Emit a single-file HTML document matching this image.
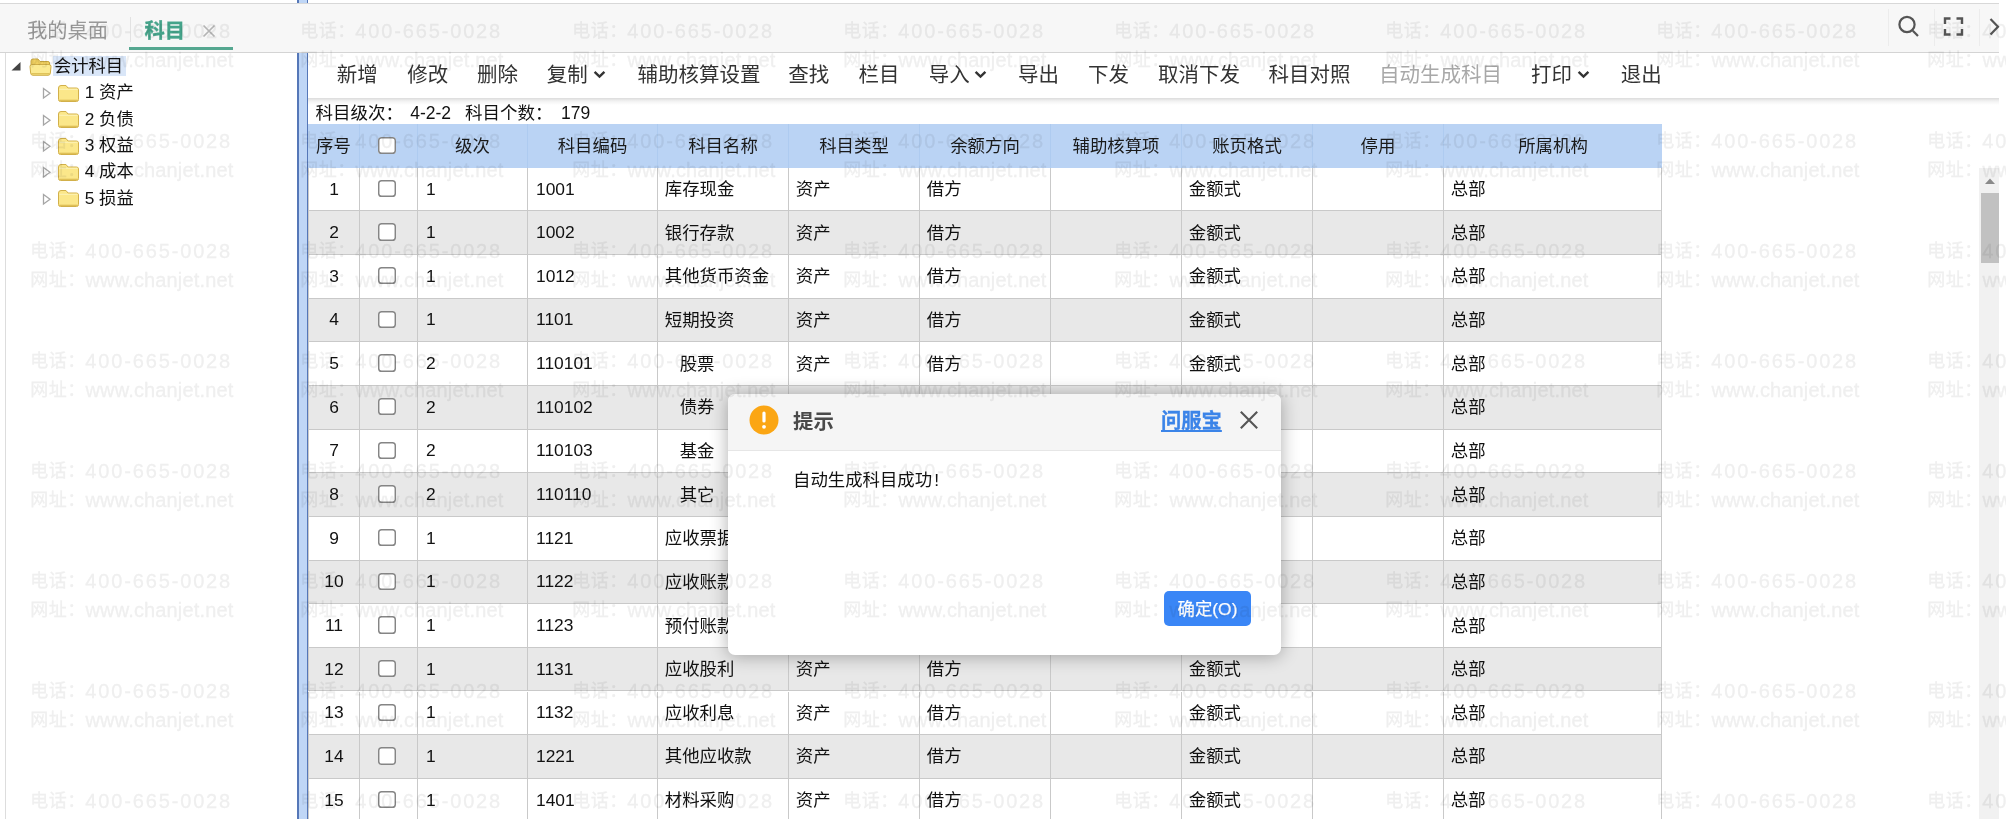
<!DOCTYPE html>
<html lang="zh-CN">
<head>
<meta charset="utf-8">
<title>科目</title>
<style>
*{box-sizing:border-box;margin:0;padding:0}
html,body{width:2006px;height:819px;overflow:hidden;background:#fff}
body{position:relative;font-family:"Liberation Sans","Noto Sans CJK SC",sans-serif;color:#222}
.abs{position:absolute}
/* tab bar */
.tabbar{position:absolute;left:0;top:3px;width:1999px;height:50px;background:#f7f7f7;border-top:1px solid #d8d8d8;border-bottom:1px solid #d4d4d4}
.tab1{position:absolute;left:27px;top:13.5px;font-size:20.3px;line-height:26px;color:#999;white-space:nowrap}
.tabsep{position:absolute;left:129.5px;top:13px;width:1px;height:25px;background:#e2e2e2}
.tab2{position:absolute;left:144.5px;top:13.5px;font-size:20.3px;line-height:26px;color:#45a38a;-webkit-text-stroke:.35px #45a38a;font-weight:bold;white-space:nowrap}
.tabx{position:absolute;left:202px;top:20px;width:14px;height:14px}
.tabline{position:absolute;left:129px;top:42.8px;width:103.5px;height:3.6px;background:#55a790}
.vsep{position:absolute;top:5px;width:1px;height:37px;background:#ececec}
/* splitter */
.split{position:absolute;left:296.5px;top:0;width:11px;height:819px;background:#bfd6f6;border-left:2px solid #5577b8;border-right:1.5px solid #5577b8}
/* left tree */
.left{position:absolute;left:5px;top:53px;width:291px;height:766px;border-left:1px solid #ddd;background:#fff}
.node{position:absolute;font-size:17.3px;line-height:22px;white-space:nowrap;color:#111}
.sel{background:#d9e6f8;padding:0 2.5px 0 1.5px}
/* toolbar */
.toolbar{position:absolute;left:308px;top:53px;width:1691px;height:45px;background:#fff}
.tshadow{position:absolute;left:308px;top:97.5px;width:1691px;height:7px;background:linear-gradient(rgba(0,0,0,.14),rgba(0,0,0,.05) 45%,rgba(0,0,0,0))}
.tb{position:absolute;top:8.5px;font-size:20.5px;line-height:26px;color:#333;white-space:nowrap}
.tb.dis{color:#a8a8a8}
.chev{position:absolute;top:16.5px;width:13px;height:9px}
.info{position:absolute;top:102px;font-size:17.5px;line-height:22px;color:#111;white-space:nowrap}
/* grid */
.grid{position:absolute;left:308px;top:0;width:1354px;height:819px}
.thead{position:absolute;left:0;width:1354px;background:#bad3f4}
.th{position:absolute;top:0;height:100%;display:flex;align-items:center;justify-content:center;font-size:17.4px;color:#1a1a1a;border-left:1px solid #aecbf0;white-space:nowrap}
.th:first-child{border-left:none}
.tr{position:absolute;left:0;width:1354px;background:#fff;border-bottom:1px solid #c9c9c9}
.tr.even{background:#e8e8e8}
.td{position:absolute;top:0;height:100%;display:flex;align-items:center;padding-left:8px;font-size:17.4px;color:#111;border-left:1px solid #c9c9c9;white-space:nowrap;overflow:hidden}
.td:last-child{border-right:1px solid #c9c9c9}
.td.c{justify-content:center;padding-left:0}
.td.z,.th.z{padding-bottom:3px}
.td.z{padding-left:6.8px}
.td.k{padding-right:3.6px}
.th.k{padding-right:3.6px}
.cb{display:inline-block;width:17.6px;height:17.4px;border-radius:3.6px;background:#fff;box-shadow:inset 0 0 0 1.45px #858585;position:relative;top:-.6px}
/* scrollbar */
.sbar{position:absolute;left:1979px;top:168px;width:20px;height:651px;background:#f1f1f1}
.sthumb{position:absolute;left:2px;top:24.5px;width:18px;height:70px;background:#c1c1c1}
/* dialog */
.dlg{position:absolute;left:727.5px;top:393.5px;width:553px;height:261px;background:#fff;border-radius:7px;box-shadow:0 1px 18px rgba(0,0,0,.32);overflow:hidden}
.dhead{position:absolute;left:0;top:0;width:100%;height:57px;background:#f5f5f5;border-bottom:1px solid #e6e6e6}
.dtitle{position:absolute;left:65.5px;top:14px;font-size:20.4px;line-height:28px;font-weight:bold;color:#4a4a4a}
.dlink{position:absolute;left:433.5px;top:13.5px;font-size:20.3px;line-height:28px;font-weight:bold;color:#3b84e8;-webkit-text-stroke:.3px #3b84e8;text-decoration:underline;white-space:nowrap}
.dmsg{position:absolute;left:65.5px;top:74px;font-size:17.4px;line-height:24px;color:#111;white-space:nowrap}
.dbtn{position:absolute;left:436.5px;top:197.5px;width:87px;height:34.5px;background:#3a86f6;border-radius:5px;color:#fff;-webkit-text-stroke:.25px #fff;font-size:17.4px;line-height:36.5px;text-align:center;white-space:nowrap}
/* watermark */
.wm{position:absolute;left:0;top:0;width:2006px;height:819px;overflow:hidden;pointer-events:none;mix-blend-mode:multiply}
.w{position:absolute;height:28.6px;line-height:28.6px;color:#efefef;-webkit-text-stroke:.3px #efefef;white-space:nowrap}
.w .a{position:absolute;left:.3px;top:0;font-size:18px;letter-spacing:.5px}
.w .b{position:absolute;left:55.3px;top:0;font-size:20px;letter-spacing:1.85px}
.w .c{position:absolute;left:55.5px;top:0;font-size:20px;letter-spacing:.15px}

</style>
</head>
<body>
<div class="split"></div>
<div class="tabbar">
  <div class="tab1">我的桌面</div>
  <div class="tabsep"></div>
  <div class="tab2">科目</div>
  <svg class="tabx" viewBox="0 0 14 14"><path d="M1.5 1.5 L12.5 12.5 M12.5 1.5 L1.5 12.5" stroke="#b4b4b4" stroke-width="1.7" fill="none"/></svg>
  <div class="tabline"></div>
  <div class="vsep" style="left:1888px"></div>
  <div class="vsep" style="left:1933.5px"></div>
  <div class="vsep" style="left:1978.5px"></div>
  <svg class="abs" style="left:1895.3px;top:8.3px" width="26" height="30" viewBox="0 0 26 30"><circle cx="12" cy="12.5" r="7.6" stroke="#555" stroke-width="2.2" fill="none"/><path d="M17.8 18.8 L23 24" stroke="#555" stroke-width="2.2" fill="none"/></svg>
  <svg class="abs" style="left:1943px;top:12px" width="22" height="22" viewBox="0 0 22 22"><path d="M2 8 V2.5 H7.5 M13.5 2.5 H19 V8 M19 13 V18.5 H13.5 M7.5 18.5 H2 V13" stroke="#555" stroke-width="2.4" fill="none"/></svg>
  <svg class="abs" style="left:1988px;top:12px" width="12" height="22" viewBox="0 0 12 22"><path d="M2.5 3 L10 10.8 L2.5 18.6" stroke="#555" stroke-width="2.2" fill="none"/></svg>
</div>
<div class="left">
  <svg class="abs" style="left:4.2px;top:8.3px" width="12" height="11" viewBox="0 0 12 11"><path d="M10.5 1 V9.5 H1.5 Z" fill="#444"/></svg>
  <svg class="abs" style="left:22px;top:3.5px" width="25" height="20" viewBox="0 0 25 20"><path d="M3 6 V4 Q3 2 5 2 H10 L12 4.5 H20 Q21.5 4.5 21.5 6 V9 H3 Z" fill="#f0d060" stroke="#c9a840" stroke-width="1"/><path d="M2 9.5 Q2 7.5 4 7.5 H21 Q23 7.5 23 9.5 L22.3 16.5 Q22 18.3 20 18.3 H5 Q3 18.3 2.7 16.5 Z" fill="#fbea90" stroke="#cfae48" stroke-width="1"/><path d="M3.2 16.8 H21.8" stroke="#d9b94e" stroke-width="1.2"/></svg>
  <div class="node" style="left:46.5px;top:1.5px"><span class="sel">会计科目</span></div>
  <svg class="abs" style="left:36.3px;top:34.3px" width="10" height="13" viewBox="0 0 10 13"><path d="M1.5 1.5 L8 6.3 L1.5 11 Z" fill="#fff" stroke="#a6a6a6" stroke-width="1.3"/></svg>
  <svg class="abs" style="left:51px;top:31.0px" width="23" height="19" viewBox="0 0 23 19"><path d="M1.5 4 Q1.5 1.5 4 1.5 H9 L11 4 H19.5 Q21.5 4 21.5 6 V15.5 Q21.5 17.5 19.5 17.5 H3.5 Q1.5 17.5 1.5 15.5 Z" fill="#fbe78a" stroke="#d2b04a" stroke-width="1"/><path d="M2.2 16.3 H20.8" stroke="#dcbc52" stroke-width="1.2"/><path d="M2.3 5.3 H20.7" stroke="#fdf3b8" stroke-width="1"/></svg>
  <div class="node" style="left:78.7px;top:28.3px">1 资产</div>
  <svg class="abs" style="left:36.3px;top:60.6px" width="10" height="13" viewBox="0 0 10 13"><path d="M1.5 1.5 L8 6.3 L1.5 11 Z" fill="#fff" stroke="#a6a6a6" stroke-width="1.3"/></svg>
  <svg class="abs" style="left:51px;top:57.3px" width="23" height="19" viewBox="0 0 23 19"><path d="M1.5 4 Q1.5 1.5 4 1.5 H9 L11 4 H19.5 Q21.5 4 21.5 6 V15.5 Q21.5 17.5 19.5 17.5 H3.5 Q1.5 17.5 1.5 15.5 Z" fill="#fbe78a" stroke="#d2b04a" stroke-width="1"/><path d="M2.2 16.3 H20.8" stroke="#dcbc52" stroke-width="1.2"/><path d="M2.3 5.3 H20.7" stroke="#fdf3b8" stroke-width="1"/></svg>
  <div class="node" style="left:78.7px;top:54.6px">2 负债</div>
  <svg class="abs" style="left:36.3px;top:87.0px" width="10" height="13" viewBox="0 0 10 13"><path d="M1.5 1.5 L8 6.3 L1.5 11 Z" fill="#fff" stroke="#a6a6a6" stroke-width="1.3"/></svg>
  <svg class="abs" style="left:51px;top:83.7px" width="23" height="19" viewBox="0 0 23 19"><path d="M1.5 4 Q1.5 1.5 4 1.5 H9 L11 4 H19.5 Q21.5 4 21.5 6 V15.5 Q21.5 17.5 19.5 17.5 H3.5 Q1.5 17.5 1.5 15.5 Z" fill="#fbe78a" stroke="#d2b04a" stroke-width="1"/><path d="M2.2 16.3 H20.8" stroke="#dcbc52" stroke-width="1.2"/><path d="M2.3 5.3 H20.7" stroke="#fdf3b8" stroke-width="1"/></svg>
  <div class="node" style="left:78.7px;top:81.0px">3 权益</div>
  <svg class="abs" style="left:36.3px;top:113.4px" width="10" height="13" viewBox="0 0 10 13"><path d="M1.5 1.5 L8 6.3 L1.5 11 Z" fill="#fff" stroke="#a6a6a6" stroke-width="1.3"/></svg>
  <svg class="abs" style="left:51px;top:110.1px" width="23" height="19" viewBox="0 0 23 19"><path d="M1.5 4 Q1.5 1.5 4 1.5 H9 L11 4 H19.5 Q21.5 4 21.5 6 V15.5 Q21.5 17.5 19.5 17.5 H3.5 Q1.5 17.5 1.5 15.5 Z" fill="#fbe78a" stroke="#d2b04a" stroke-width="1"/><path d="M2.2 16.3 H20.8" stroke="#dcbc52" stroke-width="1.2"/><path d="M2.3 5.3 H20.7" stroke="#fdf3b8" stroke-width="1"/></svg>
  <div class="node" style="left:78.7px;top:107.4px">4 成本</div>
  <svg class="abs" style="left:36.3px;top:139.7px" width="10" height="13" viewBox="0 0 10 13"><path d="M1.5 1.5 L8 6.3 L1.5 11 Z" fill="#fff" stroke="#a6a6a6" stroke-width="1.3"/></svg>
  <svg class="abs" style="left:51px;top:136.4px" width="23" height="19" viewBox="0 0 23 19"><path d="M1.5 4 Q1.5 1.5 4 1.5 H9 L11 4 H19.5 Q21.5 4 21.5 6 V15.5 Q21.5 17.5 19.5 17.5 H3.5 Q1.5 17.5 1.5 15.5 Z" fill="#fbe78a" stroke="#d2b04a" stroke-width="1"/><path d="M2.2 16.3 H20.8" stroke="#dcbc52" stroke-width="1.2"/><path d="M2.3 5.3 H20.7" stroke="#fdf3b8" stroke-width="1"/></svg>
  <div class="node" style="left:78.7px;top:133.7px">5 损益</div>
</div>
<div class="toolbar">
  <div class="tb" style="left:28.7px">新增</div>
  <div class="tb" style="left:99.2px">修改</div>
  <div class="tb" style="left:169.0px">删除</div>
  <div class="tb" style="left:238.8px">复制</div>
  <svg class="chev" style="left:284.5px" viewBox="0 0 13 9"><path d="M1.6 1.8 L6.5 6.6 L11.4 1.8" stroke="#333" stroke-width="2.4" fill="none"/></svg>
  <div class="tb" style="left:329.5px">辅助核算设置</div>
  <div class="tb" style="left:480.2px">查找</div>
  <div class="tb" style="left:550.5px">栏目</div>
  <div class="tb" style="left:620.7px">导入</div>
  <svg class="chev" style="left:666.4px" viewBox="0 0 13 9"><path d="M1.6 1.8 L6.5 6.6 L11.4 1.8" stroke="#333" stroke-width="2.4" fill="none"/></svg>
  <div class="tb" style="left:710.0px">导出</div>
  <div class="tb" style="left:780.0px">下发</div>
  <div class="tb" style="left:850.0px">取消下发</div>
  <div class="tb" style="left:960.5px">科目对照</div>
  <div class="tb dis" style="left:1071.0px">自动生成科目</div>
  <div class="tb" style="left:1223.0px">打印</div>
  <svg class="chev" style="left:1268.7px" viewBox="0 0 13 9"><path d="M1.6 1.8 L6.5 6.6 L11.4 1.8" stroke="#333" stroke-width="2.4" fill="none"/></svg>
  <div class="tb" style="left:1312.7px">退出</div>
</div>
<div class="tshadow"></div>
<div class="info" style="left:315.5px">科目级次：</div><div class="info" style="left:410.2px">4-2-2</div><div class="info" style="left:465px">科目个数：</div><div class="info" style="left:561px">179</div>
<div class="grid">
<div class="thead" style="top:124.30px;height:43.40px">
<div class="th z" style="left:0px;width:51px">序号</div>
<div class="th k" style="left:51px;width:58px"><span class="cb"></span></div>
<div class="th z" style="left:109px;width:110px">级次</div>
<div class="th z" style="left:219px;width:130px">科目编码</div>
<div class="th z" style="left:349px;width:131px">科目名称</div>
<div class="th z" style="left:480px;width:131px">科目类型</div>
<div class="th z" style="left:611px;width:131px">余额方向</div>
<div class="th z" style="left:742px;width:131px">辅助核算项</div>
<div class="th z" style="left:873px;width:131px">账页格式</div>
<div class="th z" style="left:1004px;width:131px">停用</div>
<div class="th z" style="left:1135px;width:219px">所属机构</div>
</div>
<div class="tr" style="top:167.70px;height:43.65px">
<div class="td c" style="left:0px;width:51px">1</div><div class="td c k" style="left:51px;width:58px"><span class="cb"></span></div><div class="td" style="left:109px;width:110px">1</div><div class="td" style="left:219px;width:130px">1001</div><div class="td z" style="left:349px;width:131px">库存现金</div><div class="td z" style="left:480px;width:131px">资产</div><div class="td z" style="left:611px;width:131px">借方</div><div class="td z" style="left:742px;width:131px"></div><div class="td z" style="left:873px;width:131px">金额式</div><div class="td z" style="left:1004px;width:131px"></div><div class="td z" style="left:1135px;width:219px">总部</div>
</div>
<div class="tr even" style="top:211.35px;height:43.65px">
<div class="td c" style="left:0px;width:51px">2</div><div class="td c k" style="left:51px;width:58px"><span class="cb"></span></div><div class="td" style="left:109px;width:110px">1</div><div class="td" style="left:219px;width:130px">1002</div><div class="td z" style="left:349px;width:131px">银行存款</div><div class="td z" style="left:480px;width:131px">资产</div><div class="td z" style="left:611px;width:131px">借方</div><div class="td z" style="left:742px;width:131px"></div><div class="td z" style="left:873px;width:131px">金额式</div><div class="td z" style="left:1004px;width:131px"></div><div class="td z" style="left:1135px;width:219px">总部</div>
</div>
<div class="tr" style="top:255.00px;height:43.65px">
<div class="td c" style="left:0px;width:51px">3</div><div class="td c k" style="left:51px;width:58px"><span class="cb"></span></div><div class="td" style="left:109px;width:110px">1</div><div class="td" style="left:219px;width:130px">1012</div><div class="td z" style="left:349px;width:131px">其他货币资金</div><div class="td z" style="left:480px;width:131px">资产</div><div class="td z" style="left:611px;width:131px">借方</div><div class="td z" style="left:742px;width:131px"></div><div class="td z" style="left:873px;width:131px">金额式</div><div class="td z" style="left:1004px;width:131px"></div><div class="td z" style="left:1135px;width:219px">总部</div>
</div>
<div class="tr even" style="top:298.65px;height:43.65px">
<div class="td c" style="left:0px;width:51px">4</div><div class="td c k" style="left:51px;width:58px"><span class="cb"></span></div><div class="td" style="left:109px;width:110px">1</div><div class="td" style="left:219px;width:130px">1101</div><div class="td z" style="left:349px;width:131px">短期投资</div><div class="td z" style="left:480px;width:131px">资产</div><div class="td z" style="left:611px;width:131px">借方</div><div class="td z" style="left:742px;width:131px"></div><div class="td z" style="left:873px;width:131px">金额式</div><div class="td z" style="left:1004px;width:131px"></div><div class="td z" style="left:1135px;width:219px">总部</div>
</div>
<div class="tr" style="top:342.30px;height:43.65px">
<div class="td c" style="left:0px;width:51px">5</div><div class="td c k" style="left:51px;width:58px"><span class="cb"></span></div><div class="td" style="left:109px;width:110px">2</div><div class="td" style="left:219px;width:130px">110101</div><div class="td z" style="left:349px;width:131px;padding-left:21.7px">股票</div><div class="td z" style="left:480px;width:131px">资产</div><div class="td z" style="left:611px;width:131px">借方</div><div class="td z" style="left:742px;width:131px"></div><div class="td z" style="left:873px;width:131px">金额式</div><div class="td z" style="left:1004px;width:131px"></div><div class="td z" style="left:1135px;width:219px">总部</div>
</div>
<div class="tr even" style="top:385.95px;height:43.65px">
<div class="td c" style="left:0px;width:51px">6</div><div class="td c k" style="left:51px;width:58px"><span class="cb"></span></div><div class="td" style="left:109px;width:110px">2</div><div class="td" style="left:219px;width:130px">110102</div><div class="td z" style="left:349px;width:131px;padding-left:21.7px">债券</div><div class="td z" style="left:480px;width:131px">资产</div><div class="td z" style="left:611px;width:131px">借方</div><div class="td z" style="left:742px;width:131px"></div><div class="td z" style="left:873px;width:131px">金额式</div><div class="td z" style="left:1004px;width:131px"></div><div class="td z" style="left:1135px;width:219px">总部</div>
</div>
<div class="tr" style="top:429.60px;height:43.65px">
<div class="td c" style="left:0px;width:51px">7</div><div class="td c k" style="left:51px;width:58px"><span class="cb"></span></div><div class="td" style="left:109px;width:110px">2</div><div class="td" style="left:219px;width:130px">110103</div><div class="td z" style="left:349px;width:131px;padding-left:21.7px">基金</div><div class="td z" style="left:480px;width:131px">资产</div><div class="td z" style="left:611px;width:131px">借方</div><div class="td z" style="left:742px;width:131px"></div><div class="td z" style="left:873px;width:131px">金额式</div><div class="td z" style="left:1004px;width:131px"></div><div class="td z" style="left:1135px;width:219px">总部</div>
</div>
<div class="tr even" style="top:473.25px;height:43.65px">
<div class="td c" style="left:0px;width:51px">8</div><div class="td c k" style="left:51px;width:58px"><span class="cb"></span></div><div class="td" style="left:109px;width:110px">2</div><div class="td" style="left:219px;width:130px">110110</div><div class="td z" style="left:349px;width:131px;padding-left:21.7px">其它</div><div class="td z" style="left:480px;width:131px">资产</div><div class="td z" style="left:611px;width:131px">借方</div><div class="td z" style="left:742px;width:131px"></div><div class="td z" style="left:873px;width:131px">金额式</div><div class="td z" style="left:1004px;width:131px"></div><div class="td z" style="left:1135px;width:219px">总部</div>
</div>
<div class="tr" style="top:516.90px;height:43.65px">
<div class="td c" style="left:0px;width:51px">9</div><div class="td c k" style="left:51px;width:58px"><span class="cb"></span></div><div class="td" style="left:109px;width:110px">1</div><div class="td" style="left:219px;width:130px">1121</div><div class="td z" style="left:349px;width:131px">应收票据</div><div class="td z" style="left:480px;width:131px">资产</div><div class="td z" style="left:611px;width:131px">借方</div><div class="td z" style="left:742px;width:131px"></div><div class="td z" style="left:873px;width:131px">金额式</div><div class="td z" style="left:1004px;width:131px"></div><div class="td z" style="left:1135px;width:219px">总部</div>
</div>
<div class="tr even" style="top:560.55px;height:43.65px">
<div class="td c" style="left:0px;width:51px">10</div><div class="td c k" style="left:51px;width:58px"><span class="cb"></span></div><div class="td" style="left:109px;width:110px">1</div><div class="td" style="left:219px;width:130px">1122</div><div class="td z" style="left:349px;width:131px">应收账款</div><div class="td z" style="left:480px;width:131px">资产</div><div class="td z" style="left:611px;width:131px">借方</div><div class="td z" style="left:742px;width:131px"></div><div class="td z" style="left:873px;width:131px">金额式</div><div class="td z" style="left:1004px;width:131px"></div><div class="td z" style="left:1135px;width:219px">总部</div>
</div>
<div class="tr" style="top:604.20px;height:43.65px">
<div class="td c" style="left:0px;width:51px">11</div><div class="td c k" style="left:51px;width:58px"><span class="cb"></span></div><div class="td" style="left:109px;width:110px">1</div><div class="td" style="left:219px;width:130px">1123</div><div class="td z" style="left:349px;width:131px">预付账款</div><div class="td z" style="left:480px;width:131px">资产</div><div class="td z" style="left:611px;width:131px">借方</div><div class="td z" style="left:742px;width:131px"></div><div class="td z" style="left:873px;width:131px">金额式</div><div class="td z" style="left:1004px;width:131px"></div><div class="td z" style="left:1135px;width:219px">总部</div>
</div>
<div class="tr even" style="top:647.85px;height:43.65px">
<div class="td c" style="left:0px;width:51px">12</div><div class="td c k" style="left:51px;width:58px"><span class="cb"></span></div><div class="td" style="left:109px;width:110px">1</div><div class="td" style="left:219px;width:130px">1131</div><div class="td z" style="left:349px;width:131px">应收股利</div><div class="td z" style="left:480px;width:131px">资产</div><div class="td z" style="left:611px;width:131px">借方</div><div class="td z" style="left:742px;width:131px"></div><div class="td z" style="left:873px;width:131px">金额式</div><div class="td z" style="left:1004px;width:131px"></div><div class="td z" style="left:1135px;width:219px">总部</div>
</div>
<div class="tr" style="top:691.50px;height:43.65px">
<div class="td c" style="left:0px;width:51px">13</div><div class="td c k" style="left:51px;width:58px"><span class="cb"></span></div><div class="td" style="left:109px;width:110px">1</div><div class="td" style="left:219px;width:130px">1132</div><div class="td z" style="left:349px;width:131px">应收利息</div><div class="td z" style="left:480px;width:131px">资产</div><div class="td z" style="left:611px;width:131px">借方</div><div class="td z" style="left:742px;width:131px"></div><div class="td z" style="left:873px;width:131px">金额式</div><div class="td z" style="left:1004px;width:131px"></div><div class="td z" style="left:1135px;width:219px">总部</div>
</div>
<div class="tr even" style="top:735.15px;height:43.65px">
<div class="td c" style="left:0px;width:51px">14</div><div class="td c k" style="left:51px;width:58px"><span class="cb"></span></div><div class="td" style="left:109px;width:110px">1</div><div class="td" style="left:219px;width:130px">1221</div><div class="td z" style="left:349px;width:131px">其他应收款</div><div class="td z" style="left:480px;width:131px">资产</div><div class="td z" style="left:611px;width:131px">借方</div><div class="td z" style="left:742px;width:131px"></div><div class="td z" style="left:873px;width:131px">金额式</div><div class="td z" style="left:1004px;width:131px"></div><div class="td z" style="left:1135px;width:219px">总部</div>
</div>
<div class="tr" style="top:778.80px;height:43.65px">
<div class="td c" style="left:0px;width:51px">15</div><div class="td c k" style="left:51px;width:58px"><span class="cb"></span></div><div class="td" style="left:109px;width:110px">1</div><div class="td" style="left:219px;width:130px">1401</div><div class="td z" style="left:349px;width:131px">材料采购</div><div class="td z" style="left:480px;width:131px">资产</div><div class="td z" style="left:611px;width:131px">借方</div><div class="td z" style="left:742px;width:131px"></div><div class="td z" style="left:873px;width:131px">金额式</div><div class="td z" style="left:1004px;width:131px"></div><div class="td z" style="left:1135px;width:219px">总部</div>
</div>
</div>
<div class="sbar">
  <svg class="abs" style="left:5px;top:9px" width="12" height="8" viewBox="0 0 12 8"><path d="M1 7 L6 1.5 L11 7 Z" fill="#8a8a8a"/></svg>
  <div class="sthumb"></div>
</div>
<div class="dlg">
  <div class="dhead">
    <svg class="abs" style="left:21.5px;top:11.2px" width="30" height="30" viewBox="0 0 30 30"><circle cx="15" cy="15" r="14.5" fill="#fba614"/><rect x="13.4" y="6.5" width="3.2" height="11" rx="1.6" fill="#fff"/><circle cx="15" cy="21.8" r="1.9" fill="#fff"/></svg>
    <div class="dtitle">提示</div>
    <div class="dlink">问服宝</div>
    <svg class="abs" style="left:511px;top:16.5px" width="20" height="20" viewBox="0 0 20 20"><path d="M1.8 1.8 L18.2 18.2 M18.2 1.8 L1.8 18.2" stroke="#555" stroke-width="2.1" fill="none"/></svg>
  </div>
  <div class="dmsg">自动生成科目成功<span style="margin-left:2px">!</span></div>
  <div class="dbtn">确定(O)</div>
</div>
<div class="wm">
<div class="w" style="left:30px;top:17px"><span class="a">电话：</span><span class="b">400-665-0028</span></div><div class="w" style="left:30px;top:45.6px"><span class="a">网址：</span><span class="c">www.chanjet.net</span></div><div class="w" style="left:300px;top:17px"><span class="a">电话：</span><span class="b">400-665-0028</span></div><div class="w" style="left:300px;top:45.6px"><span class="a">网址：</span><span class="c">www.chanjet.net</span></div><div class="w" style="left:572px;top:17px"><span class="a">电话：</span><span class="b">400-665-0028</span></div><div class="w" style="left:572px;top:45.6px"><span class="a">网址：</span><span class="c">www.chanjet.net</span></div><div class="w" style="left:843px;top:17px"><span class="a">电话：</span><span class="b">400-665-0028</span></div><div class="w" style="left:843px;top:45.6px"><span class="a">网址：</span><span class="c">www.chanjet.net</span></div><div class="w" style="left:1114px;top:17px"><span class="a">电话：</span><span class="b">400-665-0028</span></div><div class="w" style="left:1114px;top:45.6px"><span class="a">网址：</span><span class="c">www.chanjet.net</span></div><div class="w" style="left:1385px;top:17px"><span class="a">电话：</span><span class="b">400-665-0028</span></div><div class="w" style="left:1385px;top:45.6px"><span class="a">网址：</span><span class="c">www.chanjet.net</span></div><div class="w" style="left:1656px;top:17px"><span class="a">电话：</span><span class="b">400-665-0028</span></div><div class="w" style="left:1656px;top:45.6px"><span class="a">网址：</span><span class="c">www.chanjet.net</span></div><div class="w" style="left:1927px;top:17px"><span class="a">电话：</span><span class="b">400-665-0028</span></div><div class="w" style="left:1927px;top:45.6px"><span class="a">网址：</span><span class="c">www.chanjet.net</span></div>
<div class="w" style="left:30px;top:127px"><span class="a">电话：</span><span class="b">400-665-0028</span></div><div class="w" style="left:30px;top:155.6px"><span class="a">网址：</span><span class="c">www.chanjet.net</span></div><div class="w" style="left:300px;top:127px"><span class="a">电话：</span><span class="b">400-665-0028</span></div><div class="w" style="left:300px;top:155.6px"><span class="a">网址：</span><span class="c">www.chanjet.net</span></div><div class="w" style="left:572px;top:127px"><span class="a">电话：</span><span class="b">400-665-0028</span></div><div class="w" style="left:572px;top:155.6px"><span class="a">网址：</span><span class="c">www.chanjet.net</span></div><div class="w" style="left:843px;top:127px"><span class="a">电话：</span><span class="b">400-665-0028</span></div><div class="w" style="left:843px;top:155.6px"><span class="a">网址：</span><span class="c">www.chanjet.net</span></div><div class="w" style="left:1114px;top:127px"><span class="a">电话：</span><span class="b">400-665-0028</span></div><div class="w" style="left:1114px;top:155.6px"><span class="a">网址：</span><span class="c">www.chanjet.net</span></div><div class="w" style="left:1385px;top:127px"><span class="a">电话：</span><span class="b">400-665-0028</span></div><div class="w" style="left:1385px;top:155.6px"><span class="a">网址：</span><span class="c">www.chanjet.net</span></div><div class="w" style="left:1656px;top:127px"><span class="a">电话：</span><span class="b">400-665-0028</span></div><div class="w" style="left:1656px;top:155.6px"><span class="a">网址：</span><span class="c">www.chanjet.net</span></div><div class="w" style="left:1927px;top:127px"><span class="a">电话：</span><span class="b">400-665-0028</span></div><div class="w" style="left:1927px;top:155.6px"><span class="a">网址：</span><span class="c">www.chanjet.net</span></div>
<div class="w" style="left:30px;top:237px"><span class="a">电话：</span><span class="b">400-665-0028</span></div><div class="w" style="left:30px;top:265.6px"><span class="a">网址：</span><span class="c">www.chanjet.net</span></div><div class="w" style="left:300px;top:237px"><span class="a">电话：</span><span class="b">400-665-0028</span></div><div class="w" style="left:300px;top:265.6px"><span class="a">网址：</span><span class="c">www.chanjet.net</span></div><div class="w" style="left:572px;top:237px"><span class="a">电话：</span><span class="b">400-665-0028</span></div><div class="w" style="left:572px;top:265.6px"><span class="a">网址：</span><span class="c">www.chanjet.net</span></div><div class="w" style="left:843px;top:237px"><span class="a">电话：</span><span class="b">400-665-0028</span></div><div class="w" style="left:843px;top:265.6px"><span class="a">网址：</span><span class="c">www.chanjet.net</span></div><div class="w" style="left:1114px;top:237px"><span class="a">电话：</span><span class="b">400-665-0028</span></div><div class="w" style="left:1114px;top:265.6px"><span class="a">网址：</span><span class="c">www.chanjet.net</span></div><div class="w" style="left:1385px;top:237px"><span class="a">电话：</span><span class="b">400-665-0028</span></div><div class="w" style="left:1385px;top:265.6px"><span class="a">网址：</span><span class="c">www.chanjet.net</span></div><div class="w" style="left:1656px;top:237px"><span class="a">电话：</span><span class="b">400-665-0028</span></div><div class="w" style="left:1656px;top:265.6px"><span class="a">网址：</span><span class="c">www.chanjet.net</span></div><div class="w" style="left:1927px;top:237px"><span class="a">电话：</span><span class="b">400-665-0028</span></div><div class="w" style="left:1927px;top:265.6px"><span class="a">网址：</span><span class="c">www.chanjet.net</span></div>
<div class="w" style="left:30px;top:347px"><span class="a">电话：</span><span class="b">400-665-0028</span></div><div class="w" style="left:30px;top:375.6px"><span class="a">网址：</span><span class="c">www.chanjet.net</span></div><div class="w" style="left:300px;top:347px"><span class="a">电话：</span><span class="b">400-665-0028</span></div><div class="w" style="left:300px;top:375.6px"><span class="a">网址：</span><span class="c">www.chanjet.net</span></div><div class="w" style="left:572px;top:347px"><span class="a">电话：</span><span class="b">400-665-0028</span></div><div class="w" style="left:572px;top:375.6px"><span class="a">网址：</span><span class="c">www.chanjet.net</span></div><div class="w" style="left:843px;top:347px"><span class="a">电话：</span><span class="b">400-665-0028</span></div><div class="w" style="left:843px;top:375.6px"><span class="a">网址：</span><span class="c">www.chanjet.net</span></div><div class="w" style="left:1114px;top:347px"><span class="a">电话：</span><span class="b">400-665-0028</span></div><div class="w" style="left:1114px;top:375.6px"><span class="a">网址：</span><span class="c">www.chanjet.net</span></div><div class="w" style="left:1385px;top:347px"><span class="a">电话：</span><span class="b">400-665-0028</span></div><div class="w" style="left:1385px;top:375.6px"><span class="a">网址：</span><span class="c">www.chanjet.net</span></div><div class="w" style="left:1656px;top:347px"><span class="a">电话：</span><span class="b">400-665-0028</span></div><div class="w" style="left:1656px;top:375.6px"><span class="a">网址：</span><span class="c">www.chanjet.net</span></div><div class="w" style="left:1927px;top:347px"><span class="a">电话：</span><span class="b">400-665-0028</span></div><div class="w" style="left:1927px;top:375.6px"><span class="a">网址：</span><span class="c">www.chanjet.net</span></div>
<div class="w" style="left:30px;top:457px"><span class="a">电话：</span><span class="b">400-665-0028</span></div><div class="w" style="left:30px;top:485.6px"><span class="a">网址：</span><span class="c">www.chanjet.net</span></div><div class="w" style="left:300px;top:457px"><span class="a">电话：</span><span class="b">400-665-0028</span></div><div class="w" style="left:300px;top:485.6px"><span class="a">网址：</span><span class="c">www.chanjet.net</span></div><div class="w" style="left:572px;top:457px"><span class="a">电话：</span><span class="b">400-665-0028</span></div><div class="w" style="left:572px;top:485.6px"><span class="a">网址：</span><span class="c">www.chanjet.net</span></div><div class="w" style="left:843px;top:457px"><span class="a">电话：</span><span class="b">400-665-0028</span></div><div class="w" style="left:843px;top:485.6px"><span class="a">网址：</span><span class="c">www.chanjet.net</span></div><div class="w" style="left:1114px;top:457px"><span class="a">电话：</span><span class="b">400-665-0028</span></div><div class="w" style="left:1114px;top:485.6px"><span class="a">网址：</span><span class="c">www.chanjet.net</span></div><div class="w" style="left:1385px;top:457px"><span class="a">电话：</span><span class="b">400-665-0028</span></div><div class="w" style="left:1385px;top:485.6px"><span class="a">网址：</span><span class="c">www.chanjet.net</span></div><div class="w" style="left:1656px;top:457px"><span class="a">电话：</span><span class="b">400-665-0028</span></div><div class="w" style="left:1656px;top:485.6px"><span class="a">网址：</span><span class="c">www.chanjet.net</span></div><div class="w" style="left:1927px;top:457px"><span class="a">电话：</span><span class="b">400-665-0028</span></div><div class="w" style="left:1927px;top:485.6px"><span class="a">网址：</span><span class="c">www.chanjet.net</span></div>
<div class="w" style="left:30px;top:567px"><span class="a">电话：</span><span class="b">400-665-0028</span></div><div class="w" style="left:30px;top:595.6px"><span class="a">网址：</span><span class="c">www.chanjet.net</span></div><div class="w" style="left:300px;top:567px"><span class="a">电话：</span><span class="b">400-665-0028</span></div><div class="w" style="left:300px;top:595.6px"><span class="a">网址：</span><span class="c">www.chanjet.net</span></div><div class="w" style="left:572px;top:567px"><span class="a">电话：</span><span class="b">400-665-0028</span></div><div class="w" style="left:572px;top:595.6px"><span class="a">网址：</span><span class="c">www.chanjet.net</span></div><div class="w" style="left:843px;top:567px"><span class="a">电话：</span><span class="b">400-665-0028</span></div><div class="w" style="left:843px;top:595.6px"><span class="a">网址：</span><span class="c">www.chanjet.net</span></div><div class="w" style="left:1114px;top:567px"><span class="a">电话：</span><span class="b">400-665-0028</span></div><div class="w" style="left:1114px;top:595.6px"><span class="a">网址：</span><span class="c">www.chanjet.net</span></div><div class="w" style="left:1385px;top:567px"><span class="a">电话：</span><span class="b">400-665-0028</span></div><div class="w" style="left:1385px;top:595.6px"><span class="a">网址：</span><span class="c">www.chanjet.net</span></div><div class="w" style="left:1656px;top:567px"><span class="a">电话：</span><span class="b">400-665-0028</span></div><div class="w" style="left:1656px;top:595.6px"><span class="a">网址：</span><span class="c">www.chanjet.net</span></div><div class="w" style="left:1927px;top:567px"><span class="a">电话：</span><span class="b">400-665-0028</span></div><div class="w" style="left:1927px;top:595.6px"><span class="a">网址：</span><span class="c">www.chanjet.net</span></div>
<div class="w" style="left:30px;top:677px"><span class="a">电话：</span><span class="b">400-665-0028</span></div><div class="w" style="left:30px;top:705.6px"><span class="a">网址：</span><span class="c">www.chanjet.net</span></div><div class="w" style="left:300px;top:677px"><span class="a">电话：</span><span class="b">400-665-0028</span></div><div class="w" style="left:300px;top:705.6px"><span class="a">网址：</span><span class="c">www.chanjet.net</span></div><div class="w" style="left:572px;top:677px"><span class="a">电话：</span><span class="b">400-665-0028</span></div><div class="w" style="left:572px;top:705.6px"><span class="a">网址：</span><span class="c">www.chanjet.net</span></div><div class="w" style="left:843px;top:677px"><span class="a">电话：</span><span class="b">400-665-0028</span></div><div class="w" style="left:843px;top:705.6px"><span class="a">网址：</span><span class="c">www.chanjet.net</span></div><div class="w" style="left:1114px;top:677px"><span class="a">电话：</span><span class="b">400-665-0028</span></div><div class="w" style="left:1114px;top:705.6px"><span class="a">网址：</span><span class="c">www.chanjet.net</span></div><div class="w" style="left:1385px;top:677px"><span class="a">电话：</span><span class="b">400-665-0028</span></div><div class="w" style="left:1385px;top:705.6px"><span class="a">网址：</span><span class="c">www.chanjet.net</span></div><div class="w" style="left:1656px;top:677px"><span class="a">电话：</span><span class="b">400-665-0028</span></div><div class="w" style="left:1656px;top:705.6px"><span class="a">网址：</span><span class="c">www.chanjet.net</span></div><div class="w" style="left:1927px;top:677px"><span class="a">电话：</span><span class="b">400-665-0028</span></div><div class="w" style="left:1927px;top:705.6px"><span class="a">网址：</span><span class="c">www.chanjet.net</span></div>
<div class="w" style="left:30px;top:787px"><span class="a">电话：</span><span class="b">400-665-0028</span></div><div class="w" style="left:30px;top:815.6px"><span class="a">网址：</span><span class="c">www.chanjet.net</span></div><div class="w" style="left:300px;top:787px"><span class="a">电话：</span><span class="b">400-665-0028</span></div><div class="w" style="left:300px;top:815.6px"><span class="a">网址：</span><span class="c">www.chanjet.net</span></div><div class="w" style="left:572px;top:787px"><span class="a">电话：</span><span class="b">400-665-0028</span></div><div class="w" style="left:572px;top:815.6px"><span class="a">网址：</span><span class="c">www.chanjet.net</span></div><div class="w" style="left:843px;top:787px"><span class="a">电话：</span><span class="b">400-665-0028</span></div><div class="w" style="left:843px;top:815.6px"><span class="a">网址：</span><span class="c">www.chanjet.net</span></div><div class="w" style="left:1114px;top:787px"><span class="a">电话：</span><span class="b">400-665-0028</span></div><div class="w" style="left:1114px;top:815.6px"><span class="a">网址：</span><span class="c">www.chanjet.net</span></div><div class="w" style="left:1385px;top:787px"><span class="a">电话：</span><span class="b">400-665-0028</span></div><div class="w" style="left:1385px;top:815.6px"><span class="a">网址：</span><span class="c">www.chanjet.net</span></div><div class="w" style="left:1656px;top:787px"><span class="a">电话：</span><span class="b">400-665-0028</span></div><div class="w" style="left:1656px;top:815.6px"><span class="a">网址：</span><span class="c">www.chanjet.net</span></div><div class="w" style="left:1927px;top:787px"><span class="a">电话：</span><span class="b">400-665-0028</span></div><div class="w" style="left:1927px;top:815.6px"><span class="a">网址：</span><span class="c">www.chanjet.net</span></div>
</div>
</body>
</html>
